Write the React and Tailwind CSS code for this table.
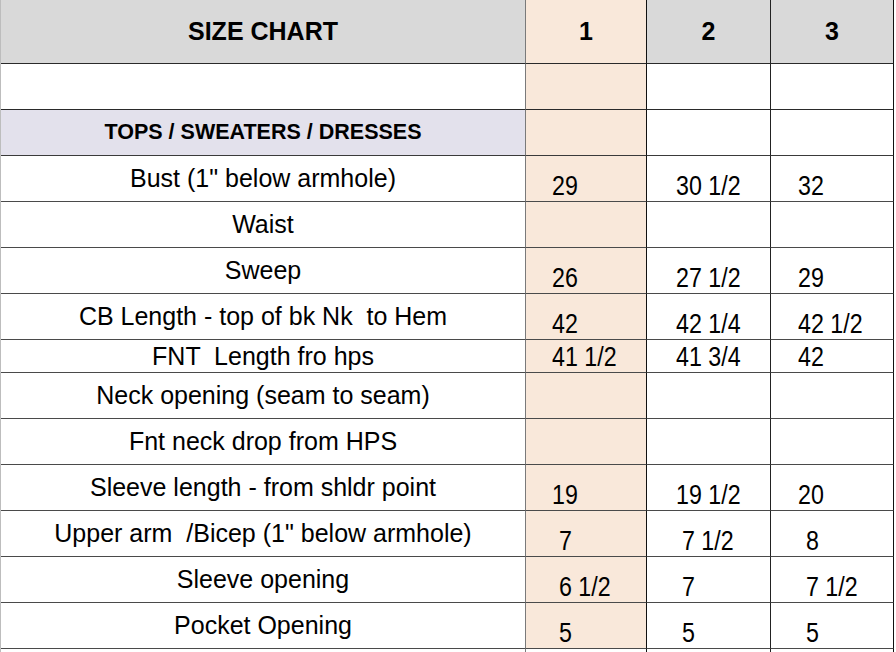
import React from "react";

const rows = [
  { label: 'Bust (1" below armhole)', v: ["29", "30 1/2", "32"] },
  { label: "Waist", v: ["", "", ""] },
  { label: "Sweep", v: ["26", "27 1/2", "29"] },
  { label: "CB Length - top of bk Nk  to Hem", v: ["42", "42 1/4", "42 1/2"] },
  { label: "FNT  Length fro hps", v: ["41 1/2", "41 3/4", "42"], short: true },
  { label: "Neck opening (seam to seam)", v: ["", "", ""] },
  { label: "Fnt neck drop from HPS", v: ["", "", ""] },
  { label: "Sleeve length - from shldr point", v: ["19", "19 1/2", "20"] },
  { label: 'Upper arm  /Bicep (1" below armhole)', v: ["7", "7 1/2", "8"], shift: true },
  { label: "Sleeve opening", v: ["6 1/2", "7", "7 1/2"], shift: true },
  { label: "Pocket Opening", v: ["5", "5", "5"], shift: true },
];

function Val({ text }) {
  return (
    <span className="inline-block origin-left scale-x-[0.86] text-[27px] leading-[27px] whitespace-pre">
      {text}
    </span>
  );
}

export default function App() {
  return (
    <div
      className="w-[896px] h-[652px] bg-white overflow-hidden text-black"
      style={{ fontFamily: '"Liberation Sans", Arial, sans-serif' }}
    >
      <div className="w-[894px] border-l border-[#bdbdbd] grid grid-cols-[525px_121px_124px_123px]">
        {/* header */}
        <div className="h-[64px] bg-[#d9d9d9] border-r border-b border-r-[#7a7a7a] border-b-[#2a2a2a] flex items-center justify-center font-bold text-[25px]">
          SIZE CHART
        </div>
        <div className="h-[64px] bg-[#f9e8da] border-r border-b border-r-[#111] border-b-[#2a2a2a] flex items-center justify-center font-bold text-[25px]">
          1
        </div>
        <div className="h-[64px] bg-[#d9d9d9] border-r border-b border-r-[#222] border-b-[#2a2a2a] flex items-center justify-center font-bold text-[25px]">
          2
        </div>
        <div className="h-[64px] bg-[#d9d9d9] border-r border-b border-r-[#111] border-b-[#2a2a2a] flex items-center justify-center font-bold text-[25px]">
          3
        </div>

        {/* empty row */}
        <div className="h-[46px] bg-white border-r border-b border-r-[#7a7a7a] border-b-[#2a2a2a]" />
        <div className="h-[46px] bg-[#f9e8da] border-r border-b border-r-[#111] border-b-[#2a2a2a]" />
        <div className="h-[46px] bg-white border-r border-b border-r-[#222] border-b-[#2a2a2a]" />
        <div className="h-[46px] bg-white border-r border-b border-r-[#111] border-b-[#2a2a2a]" />

        {/* section row */}
        <div className="h-[46px] bg-[#e3e1ec] border-r border-b border-r-[#7a7a7a] border-b-[#3a3a3a] flex items-center justify-center font-bold text-[21.5px]">
          TOPS / SWEATERS / DRESSES
        </div>
        <div className="h-[46px] bg-[#f9e8da] border-r border-b border-r-[#111] border-b-[#3a3a3a]" />
        <div className="h-[46px] bg-white border-r border-b border-r-[#222] border-b-[#3a3a3a]" />
        <div className="h-[46px] bg-white border-r border-b border-r-[#111] border-b-[#3a3a3a]" />

        {rows.map((r, i) => {
          const h = r.short ? "h-[33px]" : "h-[46px]";
          return (
            <React.Fragment key={i}>
              <div
                className={`${h} bg-white border-r border-b border-r-[#7a7a7a] border-b-[#4a4a4a] flex items-center justify-center text-[25px] leading-[29px] whitespace-pre`}
              >
                {r.label}
              </div>
              <div
                className={`${h} bg-[#f9e8da] border-r border-b border-r-[#111] border-b-[#4a4a4a] flex items-end pb-[1px] ${r.shift ? "pl-[33px]" : "pl-[26px]"}`}
              >
                <Val text={r.v[0]} />
              </div>
              <div
                className={`${h} bg-white border-r border-b border-r-[#222] border-b-[#4a4a4a] flex items-end pb-[1px] ${r.shift ? "pl-[35px]" : "pl-[29px]"}`}
              >
                <Val text={r.v[1]} />
              </div>
              <div
                className={`${h} bg-white border-r border-b border-r-[#111] border-b-[#4a4a4a] flex items-end pb-[1px] ${r.shift ? "pl-[35px]" : "pl-[27px]"}`}
              >
                <Val text={r.v[2]} />
              </div>
            </React.Fragment>
          );
        })}

        {/* partial row */}
        <div className="h-[20px] bg-white border-r border-r-[#7a7a7a]" />
        <div className="h-[20px] bg-white border-r border-r-[#111]" />
        <div className="h-[20px] bg-white border-r border-r-[#222]" />
        <div className="h-[20px] bg-white border-r border-r-[#111]" />
      </div>
    </div>
  );
}
